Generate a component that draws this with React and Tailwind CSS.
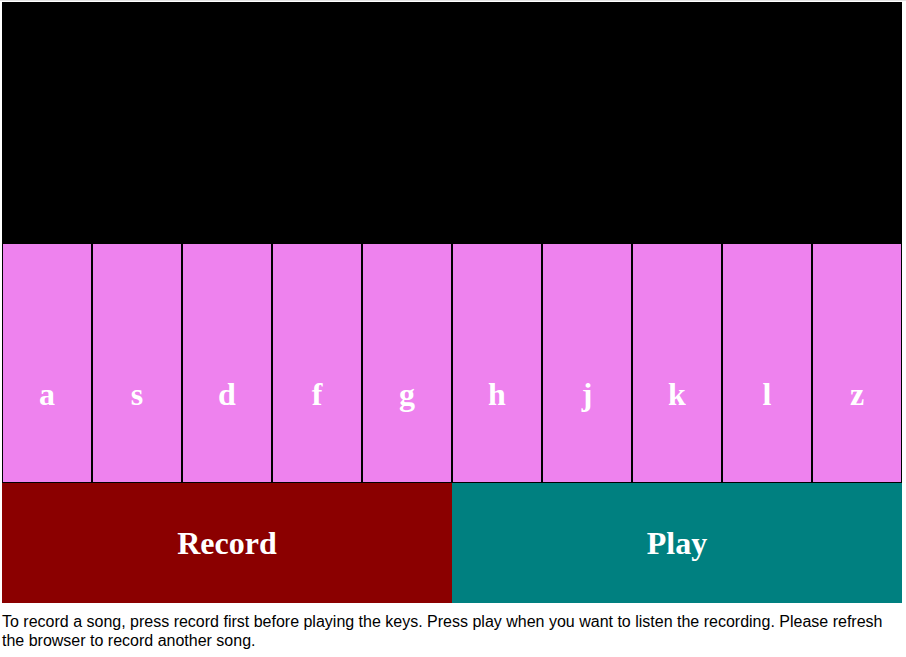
const keys = ['a', 's', 'd', 'f', 'g', 'h', 'j', 'k', 'l', 'z']

export default function App() {
  return (
    <div className="bg-white min-h-[657px]">
      <div className="h-px bg-[#e2e2e2]" />
      <div className="w-[900px] ml-[2px] mt-px">
        <div className="h-[241px] bg-black" />
        <div className="flex">
          {keys.map((k) => (
            <div
              key={k}
              className="w-[90px] h-[240px] border border-black bg-[#ee82ee] text-white text-center font-bold text-[32px] leading-[37px] pt-[132px] font-['Liberation_Serif',serif]"
            >
              {k}
            </div>
          ))}
        </div>
        <div className="flex font-['Liberation_Serif',serif] font-bold text-[32px] text-white">
          <div className="w-[450px] h-[120px] bg-[#8b0000] flex items-center justify-center">Record</div>
          <div className="w-[450px] h-[120px] bg-[#008080] flex items-center justify-center">Play</div>
        </div>
        <p className="mt-[9px] text-[16px] leading-[19px] text-black font-['Liberation_Sans',Arial,sans-serif]">
          To record a song, press record first before playing the keys. Press play when you want to listen the recording. Please refresh the browser to record another song.
        </p>
      </div>
    </div>
  )
}
